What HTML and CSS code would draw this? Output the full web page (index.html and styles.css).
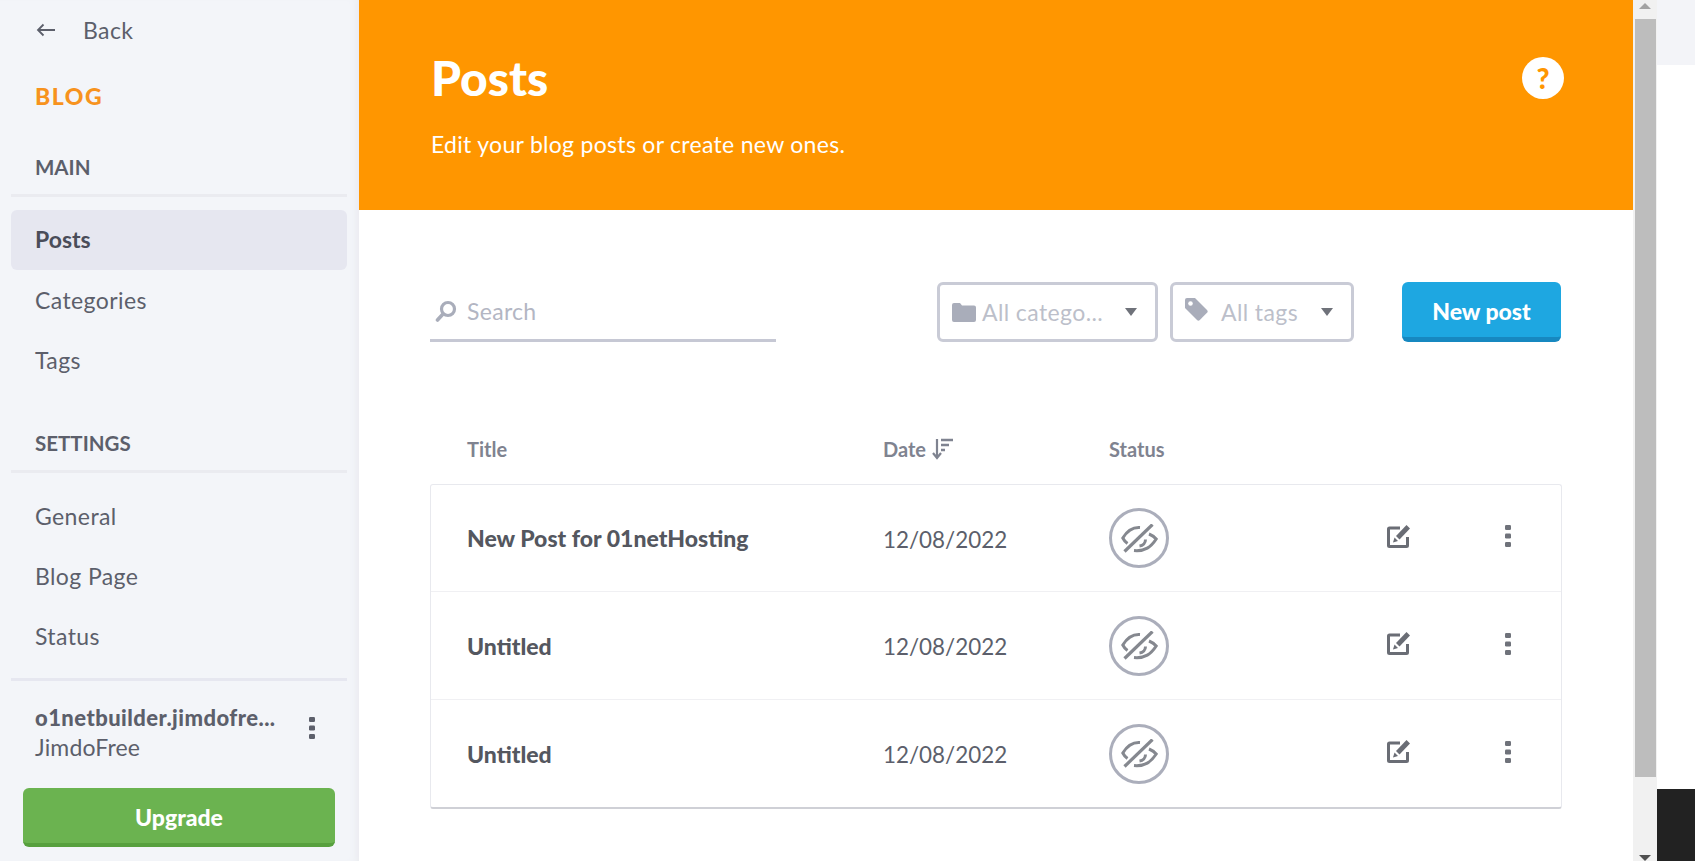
FILE: index.html
```html
<!DOCTYPE HTML>
<html>
    <head>
        <meta charset="UTF-8">
        <title>Posts</title>
        <link rel="stylesheet" href="styles.css">
    </head>
    <body>
        <svg class="defs">
            <symbol id="i-eye" viewBox="0 0 37 29">
                <path d="M19 3.500C12 3 6 7 1.800 14c1 2 2.500 4 4.700 5.500M28 10c3 1.200 5.500 3 7.200 5C30 23 24 27.500 13 26.500M24.500 15.500c0 3.500-2.500 6-6 6.500" fill="none" stroke="#85888f" stroke-width="3"/>
                <path d="M31.500 .5 3.500 27.500" stroke="#85888f" stroke-width="3.200"/>
            </symbol>
            <symbol id="i-edit" viewBox="0 0 23 23">
                <path d="M13 3H2.500a1 1 0 0 0-1 1v16.500a1 1 0 0 0 1 1H19.500a1 1 0 0 0 1-1V12" fill="none" stroke="#6a6d75" stroke-width="3"/>
                <path d="M19.500 0 23 3.500 12.500 14.500l-3.500-3.500z" fill="#6a6d75"/>
                <path d="M6 17.500 7.500 12.500 11 16z" fill="#6a6d75"/>
            </symbol>
            <symbol id="i-dots" viewBox="0 0 6 22">
                <rect y="0" width="6" height="5" rx="1.200"/>
                <rect y="8.500" width="6" height="5" rx="1.200"/>
                <rect y="17" width="6" height="5" rx="1.200"/>
            </symbol>
        </svg>
        <div id="wrap">
            <div class="side">
                <div class="back">
                    <svg class="back-icon" viewBox="0 0 20 14"><path d="M19 7H2M7.500 1.500 2 7l5.500 5.500" fill="none" stroke="#5c5f6b" stroke-width="1.800"/></svg>
                    <span>Back</span>
                </div>
                <div class="brand">BLOG</div>
                <div class="group">MAIN</div>
                <ul class="nav">
                    <li class="on">Posts</li>
                    <li>Categories</li>
                    <li>Tags</li>
                </ul>
                <div class="group group-2">SETTINGS</div>
                <ul class="nav">
                    <li>General</li>
                    <li>Blog Page</li>
                    <li>Status</li>
                </ul>
                <div class="foot">
                    <div class="site">
                        <div class="site-text">
                            <div class="site-name">o1netbuilder.jimdofre...</div>
                            <div class="site-plan">JimdoFree</div>
                        </div>
                        <svg class="dots dots-side"><use href="#i-dots"/></svg>
                    </div>
                    <div class="upgrade">Upgrade</div>
                </div>
            </div>
            <div class="main">
                <div class="head">
                    <div>
                        <h1>Posts</h1>
                        <p>Edit your blog posts or create new ones.</p>
                    </div>
                    <div class="help">?</div>
                </div>
                <div class="tools">
                    <div class="search">
                        <svg class="search-icon" viewBox="0 0 22 22"><circle cx="13" cy="9" r="6.500" fill="none" stroke="#a9adba" stroke-width="3.200"/><path d="M8 14 2.500 20" stroke="#a9adba" stroke-width="3.600" stroke-linecap="round"/></svg>
                        <span>Search</span>
                    </div>
                    <div class="select select-cat">
                        <svg class="sel-icon" viewBox="0 0 24 20"><path d="M0 3a2 2 0 0 1 2-2h6l2 2.500H22a2 2 0 0 1 2 2V18a2 2 0 0 1-2 2H2a2 2 0 0 1-2-2z" fill="#a9adba"/></svg>
                        <span class="sel-text">All catego...</span>
                        <i class="caret"></i>
                    </div>
                    <div class="select select-tag">
                        <svg class="sel-icon tag-icon" viewBox="0 0 24 24"><path d="M1 3a2 2 0 0 1 2-2h8l12 12a2 2 0 0 1 0 2.800L15.800 23a2 2 0 0 1-2.800 0L1 11z" fill="#a9adba"/><circle cx="6.500" cy="6.500" r="2.300" fill="#fff"/></svg>
                        <span class="sel-text">All tags</span>
                        <i class="caret"></i>
                    </div>
                    <div class="btn-new">New post</div>
                </div>
                <div class="cols thead">
                    <div class="c-title">Title</div>
                    <div class="c-date">Date
                        <svg class="sort-icon" viewBox="0 0 22 22"><path d="M5 1v18M1 15l4 5 4-5" fill="none" stroke="#7f8390" stroke-width="2.200"/><path d="M9 2h12M9 7h8M9 12h4" stroke="#7f8390" stroke-width="2.400"/></svg>
                    </div>
                    <div>Status</div>
                </div>
                <div class="card">
                    <div class="cols row">
                        <div class="c-title r-title">New Post for 01netHosting</div>
                        <div class="r-date">12/08/2022</div>
                        <div class="eye"><svg><use href="#i-eye"/></svg></div>
                        <svg class="edit"><use href="#i-edit"/></svg>
                        <svg class="dots"><use href="#i-dots"/></svg>
                    </div>
                    <div class="cols row">
                        <div class="c-title r-title">Untitled</div>
                        <div class="r-date">12/08/2022</div>
                        <div class="eye"><svg><use href="#i-eye"/></svg></div>
                        <svg class="edit"><use href="#i-edit"/></svg>
                        <svg class="dots"><use href="#i-dots"/></svg>
                    </div>
                    <div class="cols row">
                        <div class="c-title r-title">Untitled</div>
                        <div class="r-date">12/08/2022</div>
                        <div class="eye"><svg><use href="#i-eye"/></svg></div>
                        <svg class="edit"><use href="#i-edit"/></svg>
                        <svg class="dots"><use href="#i-dots"/></svg>
                    </div>
                </div>
            </div>
            <div class="scroll">
                <div class="arrow"><i class="arrow-up"></i></div>
                <div class="thumb"></div>
                <div class="arrow arrow-end"><i class="arrow-down"></i></div>
            </div>
            <div class="edge">
                <div class="edge-top"></div>
                <div class="edge-dark"></div>
            </div>
        </div>
    </body>
</html>
```

FILE: styles.css
```css
body,p,h1,ul,li{margin:0;padding:0;list-style:none;}
html,body{height:100%;overflow:hidden;}
body{font-family:"Lato","Liberation Sans",sans-serif;color:#5c5f6b;background:#fff;}
.defs{display:none;}

#wrap{
    display:flex;
    height:861px;
}

/* left column */
.side{
    display:flex;
    flex-direction:column;
    flex:0 0 359px;
    box-sizing:border-box;
    padding:0 12px 0 11px;
    background:#f3f5f9;
    box-shadow:inset -8px 0 8px -6px #e9eaee;
}
.back{
    display:flex;
    align-items:center;
    height:60px;
    padding-left:25px;
    font-size:23px;
    letter-spacing:.4px;
}
.back-icon{
    width:20px;
    height:14px;
    margin-right:27px;
}
.brand{
    margin:20px 0 0 24px;
    height:32px;
    line-height:32px;
    font-size:23px;
    font-weight:900;
    letter-spacing:1.500px;
    color:#f7931e;
}
.group{
    margin-top:38px;
    height:44px;
    padding-left:24px;
    line-height:34px;
    font-size:20.500px;
    font-weight:700;
    border-bottom:3px solid #eaebf0;
}
.group-2{margin-top:36px;}
.nav{margin-top:13px;}
.nav li{
    height:60px;
    line-height:60px;
    padding-left:24px;
    font-size:23px;
    letter-spacing:.4px;
    border-radius:6px;
}
.nav li.on{
    background:#e6e7f0;
    line-height:58px;
    font-weight:700;
    letter-spacing:0;
    color:#4a4d59;
}
.foot{
    margin-top:auto;
    padding-bottom:14px;
}
.site{
    display:flex;
    justify-content:space-between;
    align-items:center;
    border-top:3px solid #e6e7f0;
    padding:22px 32px 25px 24px;
}
.site-name{
    font-size:22px;
    font-weight:900;
    letter-spacing:.45px;
    line-height:29px;
}
.site-plan{
    font-size:23px;
    letter-spacing:.15px;
    line-height:31px;
}
.upgrade{
    margin:0 12px;
    height:55px;
    line-height:58px;
    text-align:center;
    font-size:23px;
    font-weight:900;
    color:#fff;
    background:#6bb350;
    border-bottom:4px solid #57a03e;
    border-radius:6px;
}
.dots{
    width:6px;
    height:22px;
    fill:#6f727a;
    margin-top:-4px;
}
.dots-side{
    margin-top:-10px;
    fill:#5c5f6b;
}

/* right column */
.main{
    flex:0 0 1274px;
}
.head{
    display:flex;
    justify-content:space-between;
    align-items:flex-start;
    height:210px;
    box-sizing:border-box;
    padding:48px 69px 0 72px;
    background:#ff9600;
    color:#fff;
}
.head h1{
    font-size:48px;
    line-height:60px;
    font-weight:900;
}
.head p{
    margin-top:21px;
    font-size:23px;
    letter-spacing:.3px;
    line-height:30px;
}
.help{
    width:42px;
    height:42px;
    margin-top:9px;
    border-radius:50%;
    background:#fff;
    color:#ff9600;
    text-align:center;
    line-height:42px;
    font-size:28px;
    font-weight:900;
}
.tools{
    display:flex;
    align-items:flex-start;
    margin-top:72px;
    padding-left:71px;
}
.search{
    display:flex;
    align-items:center;
    width:341px;
    height:56px;
    padding:1px 0 0 5px;
    box-sizing:content-box;
    border-bottom:3px solid #c6c8d4;
    color:#b3b6c3;
    font-size:23px;
    letter-spacing:.3px;
}
.search-icon{
    width:22px;
    height:22px;
    margin-right:10px;
}
.select{
    display:flex;
    align-items:center;
    box-sizing:border-box;
    height:60px;
    border:3px solid #c9cbd6;
    border-radius:6px;
    color:#bcbfca;
    font-size:23px;
    letter-spacing:.4px;
}
.select-cat{
    width:221px;
    margin-left:161px;
    padding-left:12px;
}
.select-tag{
    width:184px;
    margin-left:12px;
    padding-left:11px;
}
.sel-icon{
    width:24px;
    height:20px;
    margin-right:6px;
}
.tag-icon{
    height:24px;
    margin:-6px 13px 0 0;
}
.caret{
    margin-left:auto;
    margin-right:18px;
    border-left:6.500px solid transparent;
    border-right:6.500px solid transparent;
    border-top:8px solid #6f727a;
}
.btn-new{
    width:159px;
    height:55px;
    margin-left:48px;
    line-height:58px;
    text-align:center;
    font-size:23px;
    font-weight:900;
    color:#fff;
    background:#1ea7e1;
    border-bottom:5px solid #1788c0;
    border-radius:6px;
}
.cols{
    display:grid;
    grid-template-columns:452px 226px 276px 120px 6px;
    align-items:center;
}
.thead{
    height:34px;
    margin:90px 0 0 72px;
    font-size:20px;
    font-weight:700;
    color:#7f8390;
}
.c-title{padding-left:36px;}
.c-date{
    display:flex;
    align-items:center;
    gap:6px;
}
.sort-icon{
    width:22px;
    height:22px;
}
.card{
    width:1132px;
    margin:18px 0 0 71px;
    box-sizing:border-box;
    border:1px solid #e8e9ee;
    border-bottom:2px solid #cfd0d6;
    border-radius:3px;
}
.row{
    box-sizing:border-box;
    height:108px;
    border-bottom:1px solid #f0f0f3;
}
.row:first-child{height:107px;}
.row:last-child{
    height:107px;
    border-bottom:none;
}
.r-title{
    font-size:23px;
    font-weight:900;
    color:#54575f;
}
.r-date{
    padding-top:2px;
    font-size:22.400px;
    color:#5c5f6b;
}
.eye{
    display:flex;
    align-items:center;
    justify-content:center;
    box-sizing:border-box;
    width:60px;
    height:60px;
    border:3px solid #abaebb;
    border-radius:50%;
}
.eye svg{
    width:37px;
    height:29px;
}
.edit{
    width:23px;
    height:23px;
    margin:-4px 0 0 2px;
}

/* scrollbar drawn in the shot */
.scroll{
    display:flex;
    flex-direction:column;
    flex:0 0 24px;
    background:#f1f1f1;
}
.arrow{
    display:flex;
    justify-content:center;
    height:19px;
    padding-top:3px;
    box-sizing:border-box;
}
.arrow-end{
    flex:1;
    align-items:flex-end;
    padding:0;
}
.arrow-up{
    height:0;
    border-left:6px solid transparent;
    border-right:6px solid transparent;
    border-bottom:6px solid #a3a3a3;
}
.arrow-down{
    height:0;
    border-left:6px solid transparent;
    border-right:6px solid transparent;
    border-top:6px solid #505050;
}
.thumb{
    height:758px;
    margin:0 1px 0 2px;
    background:#bdbdbd;
}

/* what shows of the page behind */
.edge{
    display:flex;
    flex-direction:column;
    justify-content:space-between;
    flex:1;
}
.edge-top{
    height:65px;
    background:#f3f4f8;
}
.edge-dark{
    height:72px;
    background:#222;
}
```
